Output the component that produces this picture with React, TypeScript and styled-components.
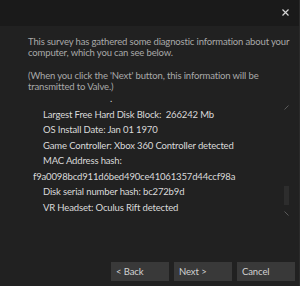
import React from "react";
import styled, { createGlobalStyle } from "styled-components";

const Global = createGlobalStyle`
  html, body { margin: 0; padding: 0; background: #212121; }
  body { font-family: Lato, "Open Sans", sans-serif; }
`;

const Window = styled.div`
  width: 300px;
  height: 286px;
  box-sizing: border-box;
  display: flex;
  flex-direction: column;
  background: #212121;
  border-right: 1px solid #2b2b2b;
  overflow: hidden;
`;

const TitleBar = styled.div`
  height: 26px;
  flex: none;
  background: #1a1a1a;
  display: flex;
  justify-content: flex-end;
  align-items: flex-start;
  padding: 9px 10px 0 0;
  box-sizing: border-box;
`;

const Close = styled.svg`
  width: 7px;
  height: 7px;
`;

const Intro = styled.div`
  padding: 10px 0 0 28px;
  width: 262px;
  font-size: 9.5px;
  letter-spacing: -0.15px;
  line-height: 11px;
  color: #a9a9a9;
`;

const Para = styled.p`
  margin: 0 0 12px 0;
  &:last-child { margin-bottom: 0; }
`;

const ListBox = styled.div`
  display: flex;
  margin-top: -1px;
  height: 134px;
`;

const ListContent = styled.div`
  flex: 1;
  padding-left: 43px;
  font-size: 9.5px;
  letter-spacing: -0.15px;
  color: #dadada;
`;

const Row = styled.div<{ $indent?: number }>`
  height: 15.5px;
  line-height: 15.5px;
  margin-left: ${(p) => p.$indent ?? 0}px;
  white-space: nowrap;
`;

const ScrollTrack = styled.div`
  width: 5px;
  margin-right: 10px;
  display: flex;
  flex-direction: column;
  padding-top: 14px;
`;

const Thumb = styled.div`
  width: 5px;
  height: 19px;
  background: #2d2d2d;
  margin-top: 76px;
`;

const Arrow = styled.svg<{ $gap?: number }>`
  width: 5px;
  height: 5px;
  flex: none;
  margin-top: ${(p) => p.$gap ?? 0}px;
`;

const ButtonRow = styled.div`
  margin-top: auto;
  display: flex;
  justify-content: flex-end;
  gap: 5px;
  padding: 0 4px 5px 0;
`;

const Button = styled.button`
  width: 58px;
  height: 19px;
  border: none;
  background: #393939;
  color: #d2d2d2;
  font-family: Lato, "Open Sans", sans-serif;
  font-size: 9.5px;
  letter-spacing: -0.1px;
  text-align: left;
  padding: 0 0 0 5px;
  line-height: 19px;
`;

export default function App() {
  return (
    <>
      <Global />
      <Window>
        <TitleBar>
          <Close viewBox="0 0 7 7">
            <path d="M0.5 0.5 L6.5 6.5 M6.5 0.5 L0.5 6.5" stroke="#d4d4d4" strokeWidth="1.2" />
          </Close>
        </TitleBar>
        <Intro>
          <Para>
            This survey has gathered some diagnostic information about your computer, which you can see below.
          </Para>
          <Para>(When you click the 'Next' button, this information will be transmitted to Valve.)</Para>
        </Intro>
        <ListBox>
          <ListContent>
            <Row $indent={67}>.</Row>
            <Row>Largest Free Hard Disk Block:&nbsp; 266242 Mb</Row>
            <Row>OS Install Date: Jan 01 1970</Row>
            <Row>Game Controller: Xbox 360 Controller detected</Row>
            <Row>MAC Address hash:</Row>
            <Row $indent={-10}>f9a0098bcd911d6bed490ce41061357d44ccf98a</Row>
            <Row>Disk serial number hash: bc272b9d</Row>
            <Row>VR Headset: Oculus Rift detected</Row>
          </ListContent>
          <ScrollTrack>
            <Arrow viewBox="0 0 5 5">
              <path d="M0.5 4.5 L4.5 0.5" stroke="#5a5a5a" strokeWidth="1" />
            </Arrow>
            <Thumb />
            <Arrow viewBox="0 0 5 5" $gap={6}>
              <path d="M0.5 0.5 L4.5 4.5" stroke="#5a5a5a" strokeWidth="1" />
            </Arrow>
          </ScrollTrack>
        </ListBox>
        <ButtonRow>
          <Button>&lt; Back</Button>
          <Button>Next &gt;</Button>
          <Button>Cancel</Button>
        </ButtonRow>
      </Window>
    </>
  );
}
